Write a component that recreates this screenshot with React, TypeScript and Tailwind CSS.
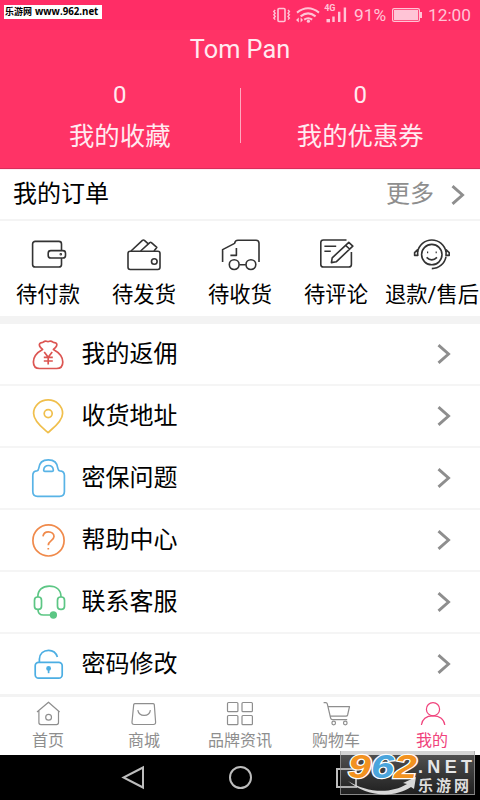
import type { ReactNode } from 'react'

interface IconItem {
  label: string
  icon: ReactNode
}

// Order status shortcuts
const ORDER_ITEMS: IconItem[] = [
  {
    label: '待付款',
    icon: (
      <>
        <path d="M37.5 16V10a2.6 2.6 0 0 0-2.6-2.6H11.2A2.6 2.6 0 0 0 8.6 10v20.4a2.6 2.6 0 0 0 2.6 2.6h23.7a2.6 2.6 0 0 0 2.6-2.6V24" />
        <rect x="24.2" y="16.6" width="17.3" height="7.4" rx="2.6" />
        <circle cx="36.8" cy="20.3" r="0.5" />
      </>
    )
  },
  {
    label: '待发货',
    icon: (
      <>
        <rect x="8" y="17.3" width="32" height="18.2" rx="2.2" />
        <circle cx="34.3" cy="27.5" r="2.8" />
        <path d="M11 17 22.4 6.4q1-.8 2 0l3.6 3.2M20.6 17l9.2-8.4q.8-.6 1.6 0l5.4 4.8-2.8 3.6" />
      </>
    )
  },
  {
    label: '待收货',
    icon: (
      <>
        <path d="M6.6 28V15.600L18.600 9.400Q19 6.200 22 6.200h18q3 0 3 3V28" />
        <path d="M20.400 14v7.400h-6M23.400 30.800h6.400" />
        <circle cx="18.200" cy="30.600" r="4.900" />
        <circle cx="34.900" cy="30.600" r="4.900" />
      </>
    )
  },
  {
    label: '待评论',
    icon: (
      <>
        <path d="M34.500 6H11.400A2.600 2.600 0 0 0 8.800 8.600v21.800a2.600 2.600 0 0 0 2.600 2.600h25.400a2.600 2.600 0 0 0 2.600-2.600V18" />
        <path d="M12.400 12.300h11.800M12.400 17.300h6.400" />
        <path d="m19.400 28.600.8-4.800L36.800 8.400l4 3.800-16.600 15.600zM33.600 11.400l4 3.600" />
      </>
    )
  },
  {
    label: '退款/售后',
    icon: (
      <>
        <circle cx="23.800" cy="20.600" r="10.200" />
        <path d="M9.600 18a14.400 14.400 0 0 1 28.400 0M38 22.600a14.400 14.400 0 0 1-14.200 12" />
        <path d="M9.400 15.800 6.600 18.600v2.800h3.200zM38.200 15.800l3 2.800v2.800H38z" />
        <path d="M18.600 23.400q5.200 5 10.400 0M19 18.400h1.200M27.600 18.400h1.200" />
      </>
    )
  }
]

const MENU_ITEMS: (IconItem & { color: string })[] = [
  {
    label: '我的返佣',
    color: 'text-[#dc5552]',
    icon: (
      <>
        <path d="M14.600 25.400c-2.600-2-4-3.800-2.900-5.800.9-1.600 2.500-.6 3.500-1.400s1.800-1.600 3.200-.9c1 .5 2.200.5 3.200 0 1.400-.7 2.400.1 3.400.9s2.800 0 3.600 1.400c1 2-.6 3.800-3.200 5.800 5 2.700 9.400 7 9.400 12.600 0 4.400-2.200 6.500-6.200 6.500H11.600c-4 0-6.200-2.100-6.200-6.500 0-5.600 4.200-9.900 9.200-12.600z" />
        <path d="m16.200 28 4 5.200 4-5.200M15.800 33.400h9M15.800 37h9M20.200 33.200v7.400" />
      </>
    )
  },
  {
    label: '收货地址',
    color: 'text-[#f0bf4c]',
    icon: (
      <>
        <path d="M20 46.600C16 43 5.600 35.600 5.600 27.400A14.400 13.400 0 0 1 34.600 27.400C34.600 35.600 24 43 20 46.600z" />
        <circle cx="20.200" cy="27.600" r="4" />
      </>
    )
  },
  {
    label: '密保问题',
    color: 'text-[#58b3e6]',
    icon: (
      <>
        <path d="M4.800 27.500q0-4.500 4-4.700 1.700-.2 1.900-2.300c.5-5.600 4.300-8.700 9.600-8.700s9.100 3.100 9.600 8.700q.2 2.100 2 2.300 4.500.3 4.500 4.700V43.500q0 4.800-4.800 4.800H9.500q-4.700 0-4.700-4.800z" />
        <path d="M17 23.400q-1.500 0-1.300-1.600.5-4.300 4.800-4.300t4.800 4.300q.2 1.600-1.300 1.600z" />
      </>
    )
  },
  {
    label: '帮助中心',
    color: 'text-[#f08a4b]',
    icon: (
      <>
        <circle cx="20.500" cy="30.400" r="15.600" />
        <path d="M15 26.400c.4-3 2.600-4.600 5.400-4.600 3.200 0 5.600 2 5.600 4.800 0 4-5.700 4.200-5.700 8.600M20.300 38v1.600" />
      </>
    )
  },
  {
    label: '联系客服',
    color: 'text-[#5cc684]',
    icon: (
      <>
        <rect x="6.500" y="25" width="7" height="12.400" rx="3.200" />
        <rect x="29.500" y="25" width="7" height="12.400" rx="3.200" />
        <path d="M9.800 25C9.800 18 14.400 14.200 21.300 14.200S33 18 33 25M10 37.400c0 4 2.200 5.600 5.400 5.600H23" />
        <circle cx="25.400" cy="43" r="2.800" fill="currentColor" />
      </>
    )
  },
  {
    label: '密码修改',
    color: 'text-[#4caee3]',
    icon: (
      <>
        <rect x="7.200" y="28.400" width="27" height="15.800" rx="3.400" />
        <path d="M11.400 28v-3c.4-5.400 4-8.600 9.200-8.600 4.400 0 7.400 2.200 8.800 6.600" />
        <circle cx="20.600" cy="34.400" r="1.600" fill="currentColor" />
        <path d="M20.600 35v4.200" />
      </>
    )
  }
]

const TABS: IconItem[] = [
  {
    label: '首页',
    icon: (
      <>
        <path d="M5 13 16.500 3.200 27.600 13M6.900 12v11.600q0 2 2 2h15.600q2 0 2-2V12" />
        <circle cx="16.600" cy="18.200" r="2.900" />
      </>
    )
  },
  {
    label: '商城',
    icon: (
      <>
        <path d="M6.800 4.600h18.400q1 0 1.100 1l1.300 17.400q.2 2.500-2.200 2.500H6.200q-2.400 0-2.200-2.500L5.700 5.600q.1-1 1.100-1z" />
        <path d="M9.800 11.200c1.200 7 11.600 7 12.600 0" />
      </>
    )
  },
  {
    label: '品牌资讯',
    icon: (
      <>
        <rect x="3.500" y="3.500" width="10.400" height="9.200" rx="1" />
        <rect x="18" y="3.500" width="10.400" height="9.200" rx="1" />
        <rect x="3.500" y="16.500" width="10.400" height="9.200" rx="1" />
        <rect x="18" y="16.500" width="10.400" height="9.200" rx="1" />
      </>
    )
  },
  {
    label: '购物车',
    icon: (
      <>
        <path d="M3.600 3.600h2.200q1.200 0 1.500 1.200L10.600 19q.4 1.700 2 1.700h14.600M7.900 7.600h21.600L27.600 16q-.3 1.200-1.600 1.200H10.200" />
        <circle cx="13.700" cy="24" r="1.800" />
        <circle cx="25.300" cy="24" r="1.800" />
      </>
    )
  },
  {
    label: '我的',
    icon: (
      <>
        <circle cx="17" cy="10.200" r="6.600" />
        <path d="M5.400 26c.8-6.200 5.600-9.200 11.600-9.200S28 19.800 28.800 26" />
      </>
    )
  }
]

function Chevron({ className }: { className: string }) {
  return (
    <svg viewBox="0 0 14 22" fill="none" stroke="#8e8e8e" strokeWidth="2.900" className={`h-[22px] w-[14px] ${className}`}>
      <path d="m1.500 2.200 10 8.800-10 8.800" />
    </svg>
  )
}

function StatusBar() {
  return (
    <div className="flex h-[30px] items-center bg-[#ff2d66] pl-[272px] text-[17.300px] text-[#ffc4d6]">
      <svg viewBox="0 0 76 30" className="h-[30px] w-[76px]" fill="none" stroke="#ffc4d6">
        {/* Vibrate */}
        <rect x="6" y="8.500" width="7" height="13" rx="1" strokeWidth="1.600" />
        <path d="M3.200 10 1.800 11.600l1.400 1.600-1.400 1.600 1.400 1.600-1.400 1.600 1.400 1.600M16 10l1.400 1.600-1.400 1.600 1.400 1.600-1.400 1.600 1.400 1.600-1.400 1.600" strokeWidth="1.400" />
        {/* Wifi */}
        <path d="M25 12.600q11-8.600 22 0M28.600 16.400q7.400-6 15 0M32.200 19.600q4-2.800 8 0" strokeWidth="2" />
        <circle cx="36.400" cy="21.200" r="1.600" fill="#ffc4d6" stroke="none" />
        <path d="m24 20 2.800-2.400v4.800zM31 20l-2.400-2.400v4.800z" fill="#ffc4d6" stroke="none" />
        {/* Signal */}
        <path d="M61.500 22v-5.500M67.200 22V11.800M72.900 22V7.500" strokeWidth="2.400" />
        <rect x="54.500" y="19" width="3.500" height="3.300" fill="#ffc4d6" stroke="none" />
        <text x="52.200" y="11" fill="#ffc4d6" stroke="none" className="font-['Roboto'] text-[9px] font-bold">4G</text>
      </svg>
      <span className="ml-[6px] w-[38px] leading-[30px]">91%</span>
      <svg viewBox="0 0 30 14" className="h-[14px] w-[30px]">
        <rect x="0.600" y="0.600" width="26.800" height="12.800" rx="1.500" fill="none" stroke="#ffc4d6" strokeWidth="1.200" />
        <rect x="2" y="2" width="24" height="10" fill="#ffc4d6" />
        <rect x="28" y="4" width="2" height="6" fill="#ffc4d6" />
      </svg>
      <span className="ml-[6px] leading-[30px]">12:00</span>
    </div>
  )
}

function Stat({ count, label }: { count: number; label: string }) {
  return (
    <div className="flex flex-1 flex-col items-center">
      <span className="text-[24px] leading-[28px]">{count}</span>
      <span className="mt-[12px] text-[25.400px] leading-[30px]">{label}</span>
    </div>
  )
}

function Watermark() {
  return (
    <div className="absolute top-[751px] left-[340px] h-[44px] w-[135px] border border-t-0 border-[#a0a0a0]/70 bg-linear-to-b from-[#a8a8a8]/50 to-[#808080]/25">
      <svg viewBox="0 0 135 44" className="h-[44px] w-[135px]">
        <path d="M7 30C26 42 50 43 66 33l-4-1 13-6-2 12-3-2C52 48 24 45 7 30z" fill="#d8d8d8" />
        <g className="font-['Liberation_Sans'] text-[34px] font-bold italic" stroke="#fff" strokeWidth="2.400" paintOrder="stroke">
          <text x="7" y="27" fill="#f29220" textLength="23" lengthAdjust="spacingAndGlyphs">9</text>
          <text x="30" y="27" fill="#4ba5dc" textLength="23" lengthAdjust="spacingAndGlyphs">6</text>
          <text x="53" y="27" fill="#f29220" textLength="23" lengthAdjust="spacingAndGlyphs">2</text>
        </g>
        <text x="77" y="21.500" fill="#e6e6e6" textLength="54" className="font-['Liberation_Sans'] text-[18px] font-bold">.NET</text>
        <text x="77" y="39.500" fill="#dedede" textLength="51" className="font-['Noto_Sans_CJK_SC'] text-[15px] font-bold">乐游网</text>
      </svg>
    </div>
  )
}

export default function App() {
  return (
    <div className="relative flex h-[800px] w-[480px] flex-col overflow-hidden bg-white font-['Roboto','Noto_Sans_CJK_SC',sans-serif] text-black">
      <StatusBar />

      {/* Profile header */}
      <header className="h-[139px] border-b border-[#d92c5a] bg-[#ff3366] text-[#ffeaf0]">
        <h1 className="pt-[4px] text-center text-[25.300px] leading-[32px]">Tom Pan</h1>
        <div className="flex pt-[15px]">
          <Stat count={0} label="我的收藏" />
          <div className="mt-[7px] h-[55px] w-px bg-[#ffa9bf]" />
          <Stat count={0} label="我的优惠券" />
        </div>
      </header>

      {/* Orders */}
      <section className="h-[147px] border-t border-[#ffeaf2]">
        <div className="flex h-[51px] items-center border-b-2 border-[#f4f4f4] pr-[15px] pl-[13px] text-[24px] leading-[48px]">
          <span className="-mt-[2px] flex-1">我的订单</span>
          <span className="-mt-[2px] text-[#8e8e8e]">更多</span>
          <Chevron className="mt-px ml-[17px]" />
        </div>
        <div className="grid grid-cols-5 pt-[13px]">
          {ORDER_ITEMS.map((item) => (
            <div key={item.label} className="flex flex-col items-center whitespace-nowrap">
              <svg viewBox="0 0 48 40" className="h-[40px] w-[48px] text-[#333]" fill="none" stroke="currentColor" strokeWidth="1.600" strokeLinejoin="round">
                {item.icon}
              </svg>
              <span className="mt-[6px] text-[21.300px] leading-[30px]">{item.label}</span>
            </div>
          ))}
        </div>
      </section>
      <div className="h-[8px] bg-[#f3f3f3]" />

      {/* Menu */}
      <nav className="flex h-[368px] flex-col">
        {MENU_ITEMS.map((item) => (
          <div key={item.label} className="flex flex-1 border-b-2 border-[#f5f5f5] pr-[29px] pl-[28px]">
            <svg viewBox="0 0 40 59" className={`h-[59px] w-[40px] ${item.color}`} fill="none" stroke="currentColor" strokeWidth="1.700" strokeLinejoin="round">
              {item.icon}
            </svg>
            <span className="ml-[13.500px] flex-1 text-[24px] leading-[60px]">{item.label}</span>
            <Chevron className="mt-[19px]" />
          </div>
        ))}
      </nav>

      {/* Tab bar */}
      <footer className="mt-[2px] h-[61px] border-t-[3px] border-[#f3f3f3]">
        <div className="grid grid-cols-5 pt-[2px]">
          {TABS.map((tab, index) => (
            <div key={tab.label} className={`flex flex-col items-center ${index === 4 ? 'text-[#f0437c]' : 'text-[#8e8e8e]'}`}>
              <svg viewBox="0 0 32 28" className="h-[28px] w-[32px]" fill="none" stroke="currentColor" strokeWidth="1.200" strokeLinejoin="round">
                {tab.icon}
              </svg>
              <span className="mt-[4px] text-[16px] leading-[20px]">{tab.label}</span>
            </div>
          ))}
        </div>
      </footer>

      {/* System navigation */}
      <div className="flex h-[45px] items-center justify-between bg-black pr-[120px] pl-[121px]">
        <svg viewBox="0 0 24 26" className="h-[26px] w-[24px]" fill="none" stroke="#bdbdbd" strokeWidth="2">
          <path d="M22 2.500v20L2.500 12.500z" />
        </svg>
        <svg viewBox="0 0 26 26" className="h-[26px] w-[26px]" fill="none" stroke="#bdbdbd" strokeWidth="2">
          <circle cx="12.500" cy="12.500" r="10.500" />
        </svg>
        <svg viewBox="0 0 24 26" className="h-[26px] w-[24px]" fill="none" stroke="#bdbdbd" strokeWidth="2">
          <rect x="1" y="4" width="19" height="18" />
        </svg>
      </div>

      <Watermark />
      <div className="absolute top-[5px] left-[4px] h-[14px] w-[98px] bg-white pl-px text-[9px] leading-[14px] font-bold whitespace-nowrap">
        <span className="font-['Noto_Sans_CJK_SC']">乐游网</span>
        <span className="ml-[3px] font-['Open_Sans'] text-[9.700px]">www.962.net</span>
      </div>
    </div>
  )
}
